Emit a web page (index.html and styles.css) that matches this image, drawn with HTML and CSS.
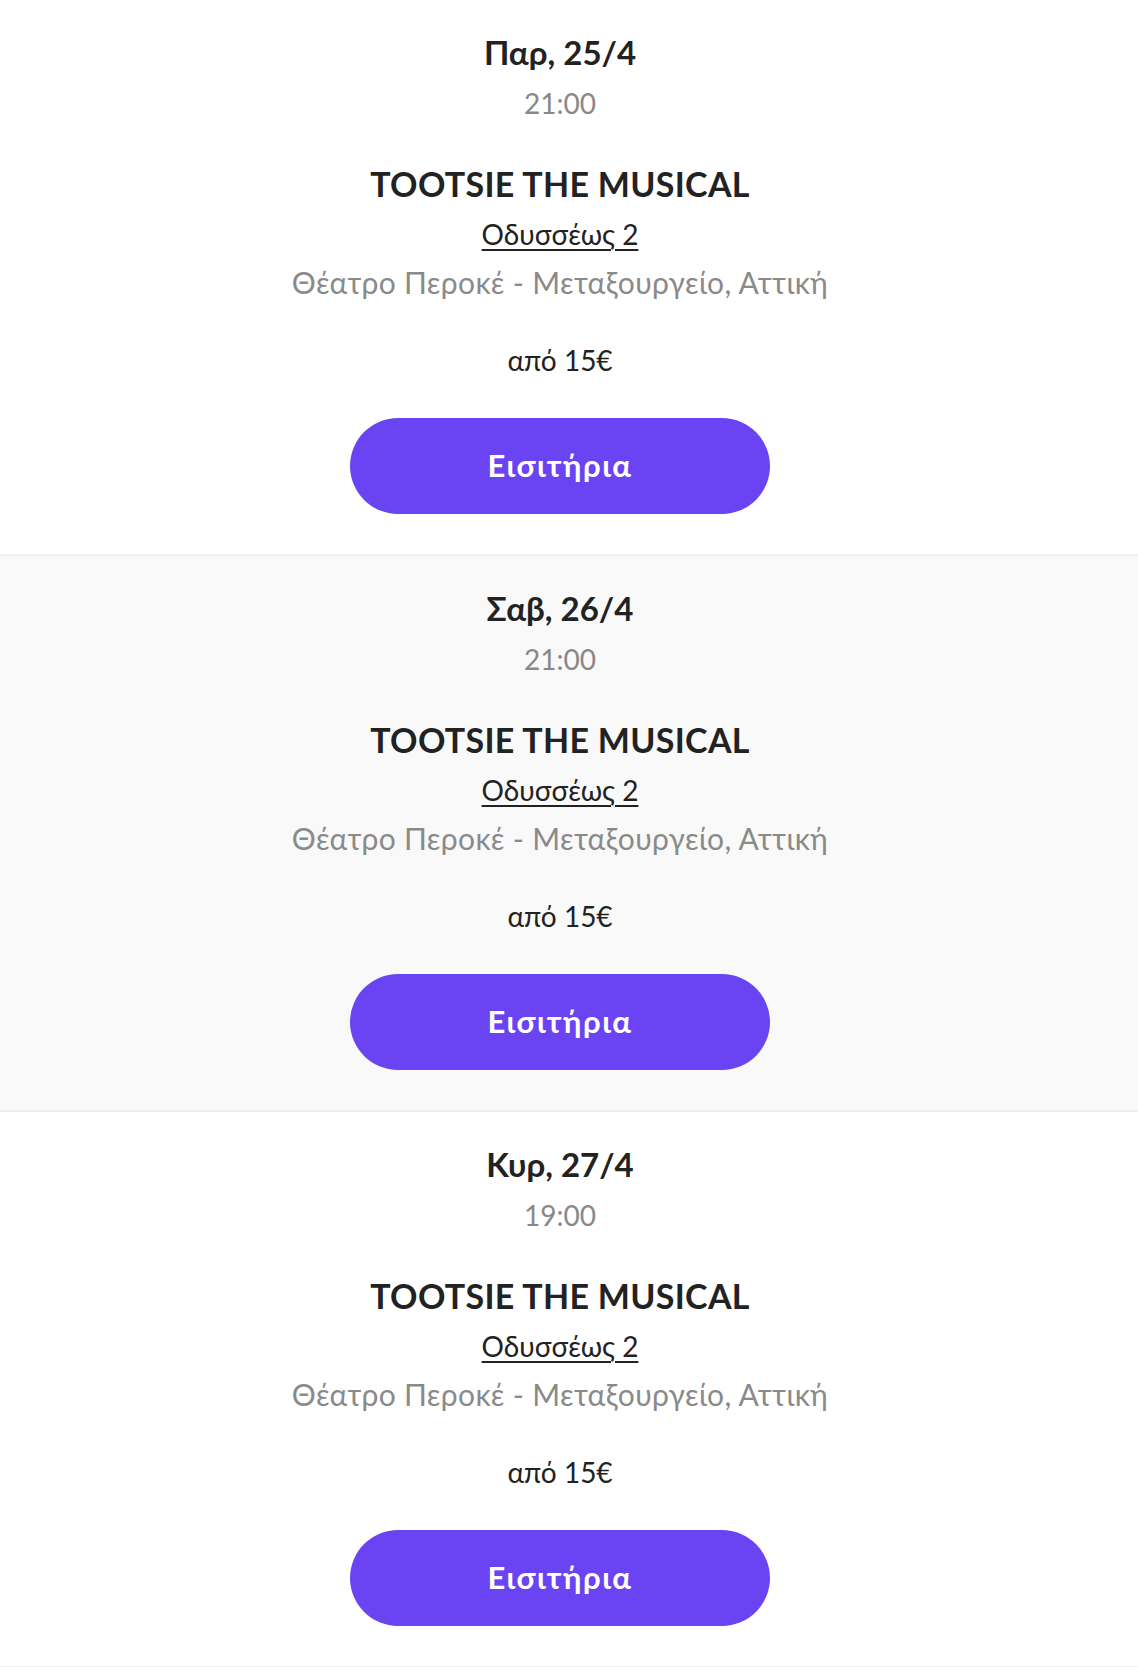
FILE: index.html
```html
<!DOCTYPE html>
<html lang="el">
<head>
<meta charset="utf-8">
<title>Tootsie</title>
<link rel="stylesheet" href="styles.css">
</head>
<body>
<main class="list">
  <section class="event">
    <div class="date">Παρ, 25/4</div>
    <div class="time">21:00</div>
    <div class="title">TOOTSIE THE MUSICAL</div>
    <a class="address" href="#">Οδυσσέως 2</a>
    <div class="venue">Θέατρο Περοκέ - Μεταξουργείο, Αττική</div>
    <div class="price">από 15€</div>
    <a class="btn" href="#">Εισιτήρια</a>
  </section>
  <section class="event alt">
    <div class="date">Σαβ, 26/4</div>
    <div class="time">21:00</div>
    <div class="title">TOOTSIE THE MUSICAL</div>
    <a class="address" href="#">Οδυσσέως 2</a>
    <div class="venue">Θέατρο Περοκέ - Μεταξουργείο, Αττική</div>
    <div class="price">από 15€</div>
    <a class="btn" href="#">Εισιτήρια</a>
  </section>
  <section class="event">
    <div class="date">Κυρ, 27/4</div>
    <div class="time">19:00</div>
    <div class="title">TOOTSIE THE MUSICAL</div>
    <a class="address" href="#">Οδυσσέως 2</a>
    <div class="venue">Θέατρο Περοκέ - Μεταξουργείο, Αττική</div>
    <div class="price">από 15€</div>
    <a class="btn" href="#">Εισιτήρια</a>
  </section>
</main>
</body>
</html>
```

FILE: styles.css
```css
* { box-sizing: border-box; }
html, body { margin: 0; padding: 0; background: #ffffff; }
body {
  font-family: "Lato", "Noto Sans", "Open Sans", sans-serif;
  color: #222222;
}
.list { display: flex; flex-direction: column; }
.event {
  height: 556px;
  display: flex;
  flex-direction: column;
  align-items: center;
  padding: 30px 18px 0 0;
  background: #ffffff;
  border-bottom: 2px solid #efefef;
  text-align: center;
}
.event.alt { background: #f9f9f9; }
.date {
  font-size: 33px;
  line-height: 44px;
  font-weight: 700;
  color: #222222;
}
.time {
  margin-top: 9px;
  font-size: 28px;
  line-height: 40px;
  color: #888888;
}
.title {
  margin-top: 39px;
  font-size: 34px;
  line-height: 44px;
  font-weight: 700;
  letter-spacing: 0.3px;
  color: #222222;
}
.address {
  margin-top: 8px;
  font-size: 28px;
  line-height: 40px;
  color: #222222;
  text-decoration: underline;
  text-underline-offset: 4px;
  text-decoration-thickness: 2px;
}
.venue {
  margin-top: 8px;
  font-size: 30px;
  line-height: 40px;
  letter-spacing: 0.35px;
  color: #8a8a8a;
}
.price {
  margin-top: 38px;
  font-size: 28px;
  line-height: 40px;
  color: #222222;
}
.btn {
  margin-top: 38px;
  width: 420px;
  height: 96px;
  border-radius: 48px;
  background: #6a44f2;
  color: #ffffff;
  display: flex;
  align-items: center;
  justify-content: center;
  padding-bottom: 3px;
  font-size: 31px;
  font-weight: 700;
  letter-spacing: 1.5px;
  text-decoration: none;
}
```
